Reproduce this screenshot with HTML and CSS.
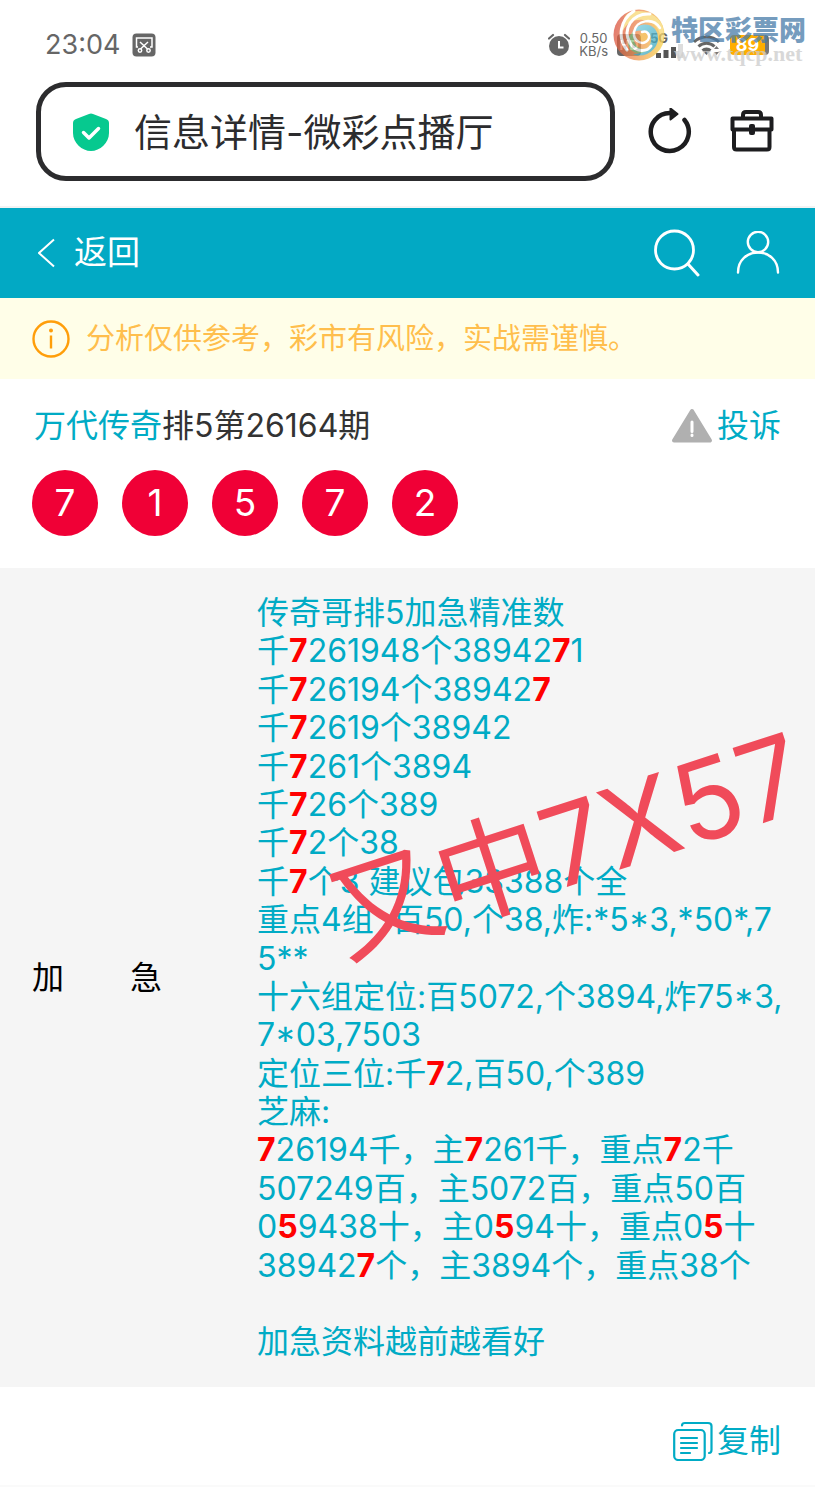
FILE: index.html
```
<!DOCTYPE html>
<html lang="zh-CN">
<head>
<meta charset="utf-8">
<meta name="viewport" content="width=device-width, initial-scale=1">
<title>信息详情-微彩点播厅</title>
<link rel="stylesheet" href="styles.css">
</head>
<body>
<div class="status">
  <div class="status-side">
    <time class="clock">23:04</time>
    <svg class="shot-icon" viewBox="0 0 24 24" aria-hidden="true"><rect x="0.5" y="0.5" width="23" height="23" rx="4" fill="#666"/><g fill="none" stroke="#fff" stroke-width="1.5"><path d="M6 14H4.500V5H20V14H18M8 9l7.500 7M16 9l-7.500 7"/><circle cx="8" cy="17.500" r="1.700"/><circle cx="16.500" cy="17.500" r="1.700"/></g></svg>
  </div>
  <div class="status-side status-right">
    <svg class="alarm-icon" viewBox="0 0 22 24" aria-hidden="true"><circle cx="11" cy="13" r="10" fill="#666"/><path d="M1 5.500 5 2M21 5.500 17 2" stroke="#666" stroke-width="2.200" stroke-linecap="round"/><path d="M11 8v6.500h4.500" fill="none" stroke="#fff" stroke-width="2"/></svg>
    <div class="speed"><span>0.50</span><span>KB/s</span></div>
    <span class="hd">HD</span>
    <div class="signal"><span>5G</span><svg class="bars-icon" viewBox="0 0 28 14" aria-hidden="true"><path d="M0 9h5v5H0zM7.500 6h5v8h-5zM15 3h5v11h-5z" fill="#555"/><path d="M22 0h5v14h-5z" fill="#ddd"/></svg></div>
    <svg class="wifi-icon" viewBox="0 0 28 22" aria-hidden="true"><g fill="none" stroke="#666" stroke-width="3"><path d="M1 8a18 18 0 0 1 25 0M5.500 12.500a11.500 11.500 0 0 1 16 0"/></g><path d="M8.500 15.500a7 7 0 0 1 10 0L13.500 21z" fill="#666"/><path d="M21 15l2.500-3 2.500 3zM21 18l2.500 3 2.500-3z" fill="#777"/></svg>
    <span class="battery">89</span>
  </div>
  <div class="watermark">
    <svg class="wm-logo" viewBox="0 0 52 52" aria-hidden="true">
      <defs>
        <linearGradient id="ball" x1="0" y1="0.4" x2="1" y2="0.6"><stop offset="0" stop-color="#d9503e"/><stop offset=".45" stop-color="#ee8a50"/><stop offset="1" stop-color="#f7d44a"/></linearGradient>
        <linearGradient id="sea" x1="0" y1="0" x2="1" y2="1"><stop offset="0" stop-color="#7fd0e4"/><stop offset="1" stop-color="#2f9fb4"/></linearGradient>
      </defs>
      <circle cx="26" cy="26" r="25.500" fill="url(#ball)"/>
      <path d="M14 5C24-1 42 2 49 16c3 8 2 14-1 19C49 22 42 12 30 11 20 10 13 15 10 22 9 15 10 9 14 5z" fill="#f8d873"/>
      <path d="M19 25c2-10 16-13 23-5 6 8 3 20-8 25-5 2-10 2-14 0 10 0 18-6 18-14 0-9-13-13-19-6z" fill="url(#sea)"/>
      <path d="M21 28c-1 10 8 15 16 10-5 8-17 8-21 0-3-6-1-12 5-15z" fill="#8ec27a"/>
      <path d="M27 30c-2-6 5-10 9-6 4 5-1 11-6 10z" fill="#f3b13c"/>
      <g fill="none" stroke="#fff" stroke-linecap="round"><path d="M21 2C7 11 4 28 14 41" stroke-width="3"/><path d="M37 5C19 4 9 20 17 34c6 10 17 9 21 3" stroke-width="3"/><path d="M47 19C40 8 23 11 21 23c-1 10 9 14 14 8 3-5-1-10-6-8" stroke-width="2.500"/></g>
    </svg>
    <div class="wm-text"><span class="wm-name">特区彩票网</span><span class="wm-url">www.tqcp.net</span></div>
  </div>
</div>

<div class="browser">
  <label class="address">
    <svg class="shield-icon" viewBox="0 0 36 38" aria-label="安全"><path d="M16 1Q18 0 20 1L33 6Q36 7 36 10V20C36 30 27 38 18 38S0 30 0 20V10Q0 7 3 6Z" fill="#06c98f"/><path d="M10.500 19.500 16 25 25.500 15.500" fill="none" stroke="#fff" stroke-width="3.500" stroke-linecap="round" stroke-linejoin="round"/></svg>
    <input class="address-input" type="text" value="信息详情-微彩点播厅" aria-label="地址栏">
  </label>
  <button class="icon-button" type="button" aria-label="刷新"><svg class="reload-icon" viewBox="0 0 44 48"><path d="M36.500 12A19 19 0 1 1 22 5" fill="none" stroke="#1d1d1f" stroke-width="4.500" stroke-linecap="round"/><path d="M22.500 0.500v11l7-5.500z" fill="#1d1d1f" stroke="#1d1d1f" stroke-width="2" stroke-linejoin="round"/></svg></button>
  <button class="icon-button" type="button" aria-label="工具箱"><svg class="case-icon" viewBox="0 0 44 44"><g fill="none" stroke="#1d1d1f" stroke-width="4" stroke-linejoin="round"><path d="M13 8V5q0-3 3-3H28q3 0 3 3V8M2.500 8.500h39v11h-39zM4 19.500V37q0 2.500 2.500 2.500H37q2.500 0 2.500-2.500V19.500"/></g><rect x="19" y="14" width="6" height="11" rx="2" fill="#1d1d1f"/></svg></button>
</div>

<header class="topbar">
  <a class="back" href="#"><svg class="back-icon" viewBox="0 0 18 30" aria-hidden="true"><path d="M16 1.500 1 15 16 28.500" fill="none" stroke="#fff" stroke-width="2"/></svg>返回</a>
  <nav class="top-actions">
    <a href="#" aria-label="搜索"><svg class="search-icon" viewBox="0 0 46 48"><circle cx="20.500" cy="21" r="19" fill="none" stroke="#fff" stroke-width="2.800"/><path d="M34 35 44 46" stroke="#fff" stroke-width="3" stroke-linecap="round"/></svg></a>
    <a href="#" aria-label="我的"><svg class="user-icon" viewBox="0 0 44 44"><g fill="none" stroke="#fff" stroke-width="2.400" stroke-linecap="round"><circle cx="22" cy="11" r="10.200"/><path d="M2 41.500C2 29 11 21.500 22 21.500S42 29 42 41.500"/></g></svg></a>
  </nav>
</header>

<p class="notice"><svg class="info-icon" viewBox="0 0 38 38" aria-hidden="true"><circle cx="19" cy="19" r="17.500" fill="none" stroke="#ff9e0a" stroke-width="2.400"/><circle cx="19" cy="10.500" r="2" fill="#ff9e0a"/><path d="M19 15.500v13" stroke="#ff9e0a" stroke-width="2.400"/></svg><span>分析仅供参考，彩市有风险，实战需谨慎。</span></p>

<main>
  <section class="issue">
    <div class="issue-head">
      <h1 class="issue-title"><a href="#">万代传奇</a>排5第26164期</h1>
      <a class="action" href="#"><svg class="warn-icon" viewBox="0 0 42 36" aria-hidden="true"><path d="M21 3 39 32.500H3z" fill="#b0b0b0" stroke="#b0b0b0" stroke-width="4" stroke-linejoin="round"/><path d="M21 14v9.500M21 27v.5" stroke="#fff" stroke-width="3" stroke-linecap="round"/></svg>投诉</a>
    </div>
    <ol class="balls"><li>7</li><li>1</li><li>5</li><li>7</li><li>2</li></ol>
  </section>

  <section class="detail">
    <h2 class="detail-label"><span>加</span><span>急</span></h2>
    <div class="detail-text">
      传奇哥排5加急精准数<br>
      千<b>7</b>261948个38942<b>7</b>1<br>
      千<b>7</b>26194个38942<b>7</b><br>
      千<b>7</b>2619个38942<br>
      千<b>7</b>261个3894<br>
      千<b>7</b>26个389<br>
      千<b>7</b>2个38<br>
      千<b>7</b>个3 建议包33388个全<br>
      重点4组 :百50,个38,炸:*5*3,*50*,7<br>
      5**<br>
      十六组定位:百5072,个3894,炸75*3,<br>
      7*03,7503<br>
      定位三位:千<b>7</b>2,百50,个389<br>
      芝麻:<br>
      <b>7</b>26194千，主<b>7</b>261千，重点<b>7</b>2千<br>
      507249百，主5072百，重点50百<br>
      0<b>5</b>9438十，主0<b>5</b>94十，重点0<b>5</b>十<br>
      38942<b>7</b>个，主3894个，重点38个<br>
      <br>
      加急资料越前越看好
    </div>
    <div class="stamp">又中7X57</div>
  </section>
</main>

<footer class="footer">
  <button class="action" type="button"><svg class="copy-icon" viewBox="0 0 40 40" aria-hidden="true"><g fill="none" stroke="#00abc5" stroke-width="2.200" stroke-linecap="round"><rect x="1.200" y="9" width="30.500" height="30" rx="4"/><path d="M9 4.500Q9 2 12 2H35Q38.500 2 38.500 5V29Q38.500 32 36 32"/><path d="M8 17h16M8 22h16M8 27h16M8 32h9"/></g></svg>复制</button>
</footer>
</body>
</html>
```
FILE: styles.css
```
* { box-sizing: border-box; }
body {
  margin: 0;
  background: #fff;
  color: #333;
  font-family: Inter, "Noto Sans CJK SC", sans-serif;
  font-size: 32px;
  line-height: 1.2;
}
svg { display: block; flex: none; }
a { color: #00abc5; text-decoration: none; }
button { border: 0; padding: 0; background: none; font: inherit; cursor: pointer; }
h1, h2, p, ol { margin: 0; padding: 0; font-size: inherit; font-weight: 400; }

.status {
  position: relative;
  display: flex;
  justify-content: space-between;
  align-items: center;
  min-height: 82px;
  padding: 8px 46px 0 45px;
  color: #666;
}
.status-side { display: flex; align-items: center; gap: 12px; }
.clock { font-size: 27px; }
.shot-icon { width: 24px; height: 24px; }
.status-right { gap: 9px; }
.alarm-icon { width: 22px; height: 24px; }
.speed { display: flex; flex-direction: column; font-size: 13px; line-height: 13px; text-align: center; }
.hd {
  width: 24px;
  border-radius: 4px;
  background: #666;
  color: #fff;
  font-size: 13px;
  font-weight: 700;
  line-height: 22px;
  text-align: center;
}
.signal {
  display: flex;
  flex-direction: column;
  width: 34px;
  font-size: 13px;
  font-weight: 700;
  line-height: 11px;
}
.bars-icon { align-self: flex-end; width: 28px; height: 14px; }
.wifi-icon { width: 28px; height: 22px; }
.battery {
  width: 39px;
  border-right: 4px solid #777;
  border-radius: 4px;
  background: #ffae00;
  color: #fff;
  font-size: 18px;
  font-weight: 700;
  line-height: 20px;
  text-align: center;
}
.watermark {
  position: absolute;
  top: 9px;
  right: 9px;
  display: flex;
  gap: 6px;
  opacity: 0.75;
}
.wm-logo { width: 52px; height: 52px; }
.wm-text { display: flex; flex-direction: column; padding-top: 7px; white-space: nowrap; }
.wm-name { color: #477ba9; font-size: 27px; font-weight: 900; line-height: 30px; }
.wm-url { padding-left: 3px; color: #ccc; font-family: "Liberation Serif", serif; font-size: 22px; font-weight: 700; line-height: 16px; }

.browser {
  display: flex;
  align-items: center;
  padding: 0 41px 25px 36px;
  border-bottom: 2px solid #f3f3f3;
}
.address {
  display: flex;
  flex: 1;
  align-items: center;
  gap: 25px;
  min-width: 0;
  height: 99px;
  margin-right: 33px;
  padding: 0 32px;
  border: 5px solid #2c2c2e;
  border-radius: 30px;
}
.shield-icon { width: 36px; height: 38px; }
.address-input {
  flex: 1;
  min-width: 0;
  border: 0;
  padding: 2px 0 0;
  outline: 0;
  background: none;
  color: #2c2c2e;
  font: inherit;
  font-size: 38px;
}
.icon-button + .icon-button { margin-left: 38px; }
.reload-icon { width: 44px; height: 48px; }
.case-icon { width: 44px; height: 44px; }

.topbar {
  display: flex;
  align-items: center;
  justify-content: space-between;
  min-height: 90px;
  padding: 0 35px 0 38px;
  background: #02a9c4;
}
.back { display: flex; align-items: center; gap: 18px; color: #fff; font-size: 33px; }
.back-icon { width: 18px; height: 30px; }
.top-actions { display: flex; align-items: center; gap: 36px; }
.search-icon { width: 46px; height: 48px; }
.user-icon { width: 44px; height: 44px; }

.notice {
  display: flex;
  align-items: center;
  gap: 16px;
  min-height: 81px;
  padding: 0 32px;
  background: #fffee8;
  color: #ffbe4d;
  font-size: 29px;
}
.notice span { padding-top: 2px; }
.info-icon { width: 38px; height: 38px; }

.issue { padding: 27px 34px 32px 32px; }
.issue-head { display: flex; align-items: center; justify-content: space-between; padding-left: 2px; line-height: 40px; }
.action { display: flex; align-items: center; gap: 4px; color: #00abc5; }
.warn-icon { width: 42px; height: 36px; }
.balls { display: flex; gap: 24px; margin-top: 24px; list-style: none; }
.balls li {
  width: 66px;
  border-radius: 50%;
  background: #f00036;
  color: #fff;
  font-size: 37px;
  line-height: 66px;
  text-align: center;
}

.detail {
  position: relative;
  display: grid;
  grid-template-columns: 192px 1fr;
  column-gap: 33px;
  align-items: center;
  padding: 26px 32px 25px;
  background: #f5f5f5;
}
.detail-label { display: flex; gap: 66px; color: #000; }
.detail-text { color: #00abc5; white-space: nowrap; }
.detail-text b { color: #f00; font-weight: 700; }
.stamp {
  position: absolute;
  top: 211px;
  right: 3px;
  color: #f04b5a;
  font-size: 111px;
  line-height: 132px;
  white-space: nowrap;
  transform: rotate(-18deg);
}

.footer {
  display: flex;
  justify-content: flex-end;
  padding: 34px 34px 24px;
  border-bottom: 2px solid #fafafa;
}
.copy-icon { width: 40px; height: 40px; }
```
